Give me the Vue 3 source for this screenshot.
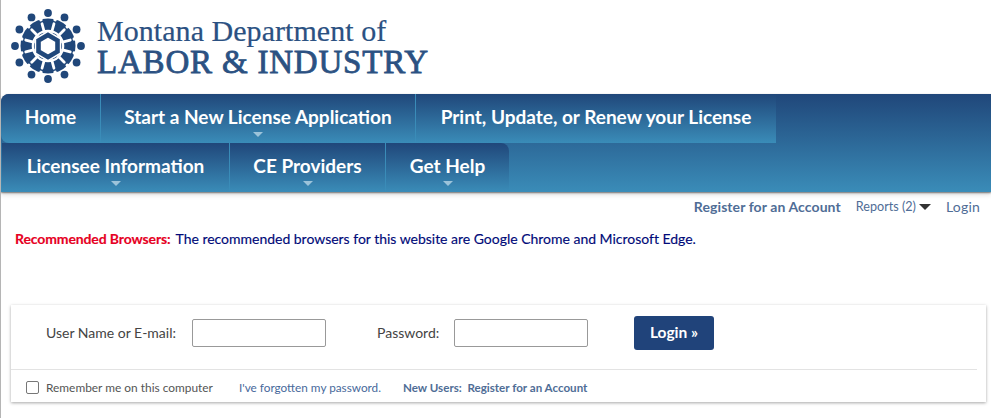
<template>
  <div class="page">
    <header class="brand">
      <svg class="emblem" width="76" height="76" viewBox="-38 -38 76 76" aria-hidden="true">
        <g fill="#20477a">
          <circle v-for="a in angles" :key="'d' + a" :cx="pt(a, 33).x" :cy="pt(a, 33).y" r="3.9" />
          <circle r="27.5" />
        </g>
        <g fill="none" stroke-linecap="round">
          <line v-for="a in angles" :key="'s' + a" :x1="pt(a + 15, 15).x" :y1="pt(a + 15, 15).y" :x2="pt(a + 15, 23).x" :y2="pt(a + 15, 23).y" stroke="#fff" stroke-width="2.8" />
          <line v-for="a in angles" :key="'n' + a" :x1="pt(a + 15, 30.2).x" :y1="pt(a + 15, 30.2).y" :x2="pt(a + 15, 27.2).x" :y2="pt(a + 15, 27.2).y" stroke="#fff" stroke-width="3.4" />
          <circle r="15.2" stroke="#fff" stroke-width="2.2" />
          <polygon points="0,-12.5 10.8,-6.25 10.8,6.25 0,12.5 -10.8,6.25 -10.8,-6.25" stroke="#fff" stroke-width="5" fill="#fff" />
          <polygon points="0,-11 9.5,-5.5 9.5,5.5 0,11 -9.5,5.5 -9.5,-5.5" stroke="#20477a" stroke-width="4.6" fill="#fff" />
        </g>
      </svg>
      <div class="wordmark">
        <div class="wm-top">Montana Department of</div>
        <div class="wm-bottom">LABOR &amp; INDUSTRY</div>
      </div>
    </header>

    <nav class="nav">
      <div class="nav-row">
        <a class="tab home">Home</a>
        <a class="tab start caret">Start a New License Application</a>
        <a class="tab print">Print, Update, or Renew your License</a>
      </div>
      <div class="nav-row second">
        <a class="tab info caret">Licensee Information</a>
        <a class="tab ce caret">CE Providers</a>
        <a class="tab help caret">Get Help</a>
      </div>
    </nav>

    <div class="userbar">
      <a class="reg">Register for an Account</a>
      <a class="reports">Reports (2)<i class="down"></i></a>
      <a class="login-link">Login</a>
    </div>

    <p class="notice"><b>Recommended Browsers:</b><span>The recommended browsers for this website are Google Chrome and Microsoft Edge.</span></p>

    <section class="card">
      <div class="fields">
        <label class="lbl-user">User Name or E-mail:</label>
        <input class="field" type="text" />
        <label class="lbl-pass">Password:</label>
        <input class="field" type="password" />
        <button class="btn" type="button">Login »</button>
      </div>
      <div class="foot">
        <span class="check"></span>
        <span class="remember">Remember me on this computer</span>
        <a class="forgot">I've forgotten my password.</a>
        <a class="newuser">New Users:&nbsp; Register for an Account</a>
      </div>
    </section>
  </div>
</template>

<script setup>
const angles = Array.from({ length: 12 }, (_, i) => i * 30)
function pt(deg, r) {
  const t = (deg * Math.PI) / 180
  return { x: +(Math.sin(t) * r).toFixed(2), y: +(-Math.cos(t) * r).toFixed(2) }
}
</script>

<style>
html, body { margin: 0; background: #fff; }
</style>

<style scoped>
.page {
  width: 990px;
  height: 418px;
  overflow: hidden;
  border-left: 1px solid #b5b5b5;
  font-family: Lato, "Noto Sans", sans-serif;
  color: #444;
}
.brand {
  height: 94px;
  display: flex;
  align-items: flex-start;
  box-sizing: border-box;
  padding: 8px 0 0 9px;
}
.emblem { flex: none; }
.wordmark {
  margin: 7.5px 0 0 11px;
  font-family: "Liberation Serif", serif;
  color: #2b5182;
  white-space: nowrap;
}
.wm-top { font-size: 30px; line-height: 30px; letter-spacing: 0.05px; -webkit-text-stroke: 0.2px #2b5182; }
.wm-bottom { font-size: 33px; line-height: 32px; letter-spacing: 0.8px; -webkit-text-stroke: 0.8px #2b5182; }
.nav {
  height: 98px;
  border-radius: 8px 0 0 0;
  background: linear-gradient(#20477a, #3a8cb8);
  box-shadow: 0 1px 2px rgba(0, 0, 0, 0.5), 0 3px 5px rgba(0, 0, 0, 0.12);
}
.nav-row { display: flex; height: 49px; }
.tab {
  position: relative;
  display: block;
  height: 49px;
  line-height: 45px;
  box-sizing: border-box;
  text-align: center;
  color: #fff;
  font-size: 19px;
  font-weight: 700;
  background: linear-gradient(#20477a, #3a8cb8);
  border-right: 1px solid #3a8cb8;
  white-space: nowrap;
}
.home { width: 100px; border-radius: 8px 0 0 8px; }
.start { width: 315px; }
.print { width: 360px; border-right: 0; }
.second { padding-left: 1px; }
.info { width: 228px; }
.ce { width: 156px; }
.help { width: 123px; border-right: 0; border-radius: 0 8px 0 0; }
.caret::after {
  content: "";
  position: absolute;
  left: 50%;
  bottom: 6px;
  margin-left: -5px;
  border: 5px solid transparent;
  border-bottom: 0;
  border-top-color: #9cc3da;
}
.userbar {
  display: flex;
  align-items: center;
  justify-content: flex-end;
  height: 29px;
  padding: 0 11px 1px 0;
  color: #4f6d96;
  white-space: nowrap;
}
.reg { font-size: 14px; font-weight: 700; letter-spacing: 0.09px; }
.reports { font-size: 12.6px; margin-left: 15px; display: flex; align-items: center; }
.down {
  margin-left: 3px;
  border: 6px solid transparent;
  border-bottom: 0;
  border-top-color: #333;
}
.login-link { font-size: 14px; margin-left: 15px; letter-spacing: 0.2px; }
.notice {
  margin: 0;
  padding: 9px 0 0 14px;
  height: 24px;
  line-height: 16px;
  font-size: 14px;
  color: #000a78;
  display: flex;
  white-space: nowrap;
  -webkit-text-stroke: 0.15px currentColor;
}
.notice b { color: #e60023; margin-right: 5px; letter-spacing: -0.12px; }
.notice span { letter-spacing: -0.015px; }
.card {
  margin: 50px 0 0 10px;
  width: 975px;
  height: 97px;
  box-sizing: border-box;
  background: #fff;
  box-shadow: 0 1px 3px rgba(0, 0, 0, 0.35);
}
.fields {
  height: 64px;
  display: flex;
  align-items: center;
  box-sizing: border-box;
  padding: 0 0 8px 35px;
  font-size: 14px;
  color: #444;
  white-space: nowrap;
}
.fields label { padding-bottom: 1px; }
.field {
  width: 134px;
  height: 28px;
  box-sizing: border-box;
  border: 1px solid #999;
  border-radius: 2px;
  background: #fff;
  margin: 0;
  padding: 0;
}
.lbl-user { width: 131px; margin-right: 15px; }
.lbl-pass { margin-left: 51px; width: 62px; margin-right: 15px; }
.btn {
  margin-left: 46px;
  width: 80px;
  height: 34px;
  border: 0;
  border-radius: 3px;
  background: #20437a;
  color: #fff;
  font: 700 15.5px Lato, sans-serif;
  padding: 0 0 3px;
}
.foot {
  margin: 0 9px 0 0;
  height: 33px;
  border-top: 1px solid #e3e3e3;
  display: flex;
  align-items: center;
  font-size: 11.9px;
  box-sizing: border-box;
  padding: 3px 0 0 15px;
  white-space: nowrap;
}
.check {
  flex: none;
  width: 13px;
  height: 13px;
  border: 1px solid #777;
  border-radius: 2px;
  box-sizing: border-box;
  margin-right: 7px;
}
.remember { width: 166px; color: #555; }
.forgot { margin-left: 27px; width: 142px; color: #47699b; font-size: 11.75px; }
.newuser { margin-left: 22px; font-weight: 700; color: #4f6d96; font-size: 11.6px; }
</style>
